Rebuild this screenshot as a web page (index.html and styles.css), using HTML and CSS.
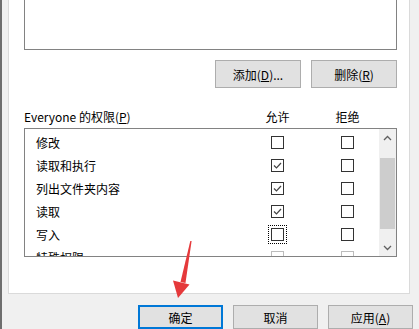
FILE: index.html
```html
<!DOCTYPE html>
<html lang="zh-CN">
<head>
    <meta charset="UTF-8">
    <title>Everyone 的权限</title>
    <link rel="stylesheet" href="styles.css">
</head>
<body>
    <div class="window">
        <div class="tab-page">
            <div class="user-list"></div>

            <div class="button-row">
                <button class="win-btn">添加(<u>D</u>)...</button>
                <button class="win-btn">删除(<u>R</u>)</button>
            </div>

            <div class="perm-head">
                <span>Everyone 的权限(<u>P</u>)</span>
                <span class="col-title">允许</span>
                <span></span>
                <span class="col-title">拒绝</span>
            </div>

            <div class="perm-list">
                <div class="perm-rows">
                    <div class="perm-row">
                        <span class="perm-name">修改</span>
                        <span class="check"></span>
                        <span></span>
                        <span class="check"></span>
                    </div>
                    <div class="perm-row">
                        <span class="perm-name">读取和执行</span>
                        <span class="check checked"></span>
                        <span></span>
                        <span class="check"></span>
                    </div>
                    <div class="perm-row">
                        <span class="perm-name">列出文件夹内容</span>
                        <span class="check checked"></span>
                        <span></span>
                        <span class="check"></span>
                    </div>
                    <div class="perm-row">
                        <span class="perm-name">读取</span>
                        <span class="check checked"></span>
                        <span></span>
                        <span class="check"></span>
                    </div>
                    <div class="perm-row">
                        <span class="perm-name">写入</span>
                        <span class="check focused"></span>
                        <span></span>
                        <span class="check"></span>
                    </div>
                    <div class="perm-row">
                        <span class="perm-name">特殊权限</span>
                        <span class="check disabled"></span>
                        <span></span>
                        <span class="check disabled"></span>
                    </div>
                </div>
                <div class="scrollbar">
                    <div class="scroll-arrow">
                        <svg width="9" height="6" viewBox="0 0 9 6"><path d="M1 5 L4.5 1.5 L8 5" fill="none" stroke="#606060" stroke-width="1.3"/></svg>
                    </div>
                    <div class="scroll-track">
                        <div class="scroll-thumb"></div>
                    </div>
                    <div class="scroll-arrow">
                        <svg width="9" height="6" viewBox="0 0 9 6"><path d="M1 1 L4.5 4.5 L8 1" fill="none" stroke="#606060" stroke-width="1.3"/></svg>
                    </div>
                </div>
            </div>
        </div>

        <div class="footer">
            <button class="win-btn default">确定</button>
            <button class="win-btn">取消</button>
            <button class="win-btn">应用(<u>A</u>)</button>
        </div>
    </div>

    <!-- red annotation arrow pointing at the OK button -->
    <svg class="annotation" width="419" height="329" viewBox="0 0 419 329">
        <polygon points="190.3,241 191.6,241 185.5,283 180.5,282" fill="#e5393b"/>
        <polygon points="173,280.5 189.5,284.5 178,298" fill="#e5393b"/>
    </svg>
</body>
</html>
```

FILE: styles.css
```css
body {
    margin: 0;
    width: 419px;
    height: 329px;
    overflow: hidden;
    background: #f0f0f0;
    font-family: "Microsoft YaHei", "Noto Sans CJK SC", sans-serif;
    font-size: 12px;
    color: #000;
    position: relative;
}
.window {
    height: 329px;
    border-left: 2px solid #6e6e6e;
    padding-left: 6px;
    box-sizing: border-box;
}
.tab-page {
    background: #fff;
    height: 293px;
    margin-right: 9px;
    border: 1px solid #dadada;
    border-top: none;
    padding: 0 12px 0 15px;
}
.user-list {
    height: 49px;
    border: 1px solid #828282;
    border-top: none;
}
.button-row {
    display: flex;
    justify-content: flex-end;
    gap: 10px;
    margin-top: 10px;
}
.win-btn {
    width: 86px;
    height: 28px;
    padding: 0;
    background: #e1e1e1;
    border: 1px solid #adadad;
    font-family: inherit;
    font-size: 12px;
    color: #000;
}
.perm-head {
    display: grid;
    grid-template-columns: 233px 41px 29px 41px;
    align-items: center;
    height: 20px;
    margin-top: 18px;
    margin-bottom: 2px;
}
.col-title {
    text-align: center;
}
.perm-list {
    display: flex;
    height: 129px;
    box-sizing: border-box;
    border: 1px solid #828282;
}
.perm-rows {
    flex: 1;
    overflow: hidden;
    padding-top: 2px;
}
.perm-row {
    display: grid;
    grid-template-columns: 246px 13px 57px 13px;
    align-items: center;
    height: 23px;
}
.perm-name {
    padding-left: 11px;
}
.check {
    width: 13px;
    height: 13px;
    box-sizing: border-box;
    border: 1px solid #333;
    background: #fff;
}
.check.checked {
    background: #fff url("data:image/svg+xml;utf8,<svg xmlns='http://www.w3.org/2000/svg' width='11' height='11'><path d='M2 5.5 L4.5 8 L9 3' fill='none' stroke='%23444' stroke-width='1.2'/></svg>") no-repeat center;
}
.check.focused {
    outline: 1px dotted #000;
    outline-offset: 2px;
}
.check.disabled {
    border-color: #bcbcbc;
}
.scrollbar {
    width: 17px;
    display: flex;
    flex-direction: column;
    background: #f0f0f0;
}
.scroll-arrow {
    height: 17px;
    display: flex;
    align-items: center;
    justify-content: center;
}
.scroll-track {
    flex: 1;
    padding-top: 12px;
}
.scroll-thumb {
    height: 71px;
    margin: 0 1px;
    background: #cdcdcd;
}
.footer {
    display: flex;
    justify-content: flex-end;
    gap: 10px;
    margin-top: 11px;
    padding-right: 6px;
}
.footer .win-btn {
    width: 85px;
    height: 24px;
}
.footer .win-btn.default {
    border: 2px solid #0078d7;
}
.annotation {
    position: absolute;
    left: 0;
    top: 0;
    pointer-events: none;
}
```
